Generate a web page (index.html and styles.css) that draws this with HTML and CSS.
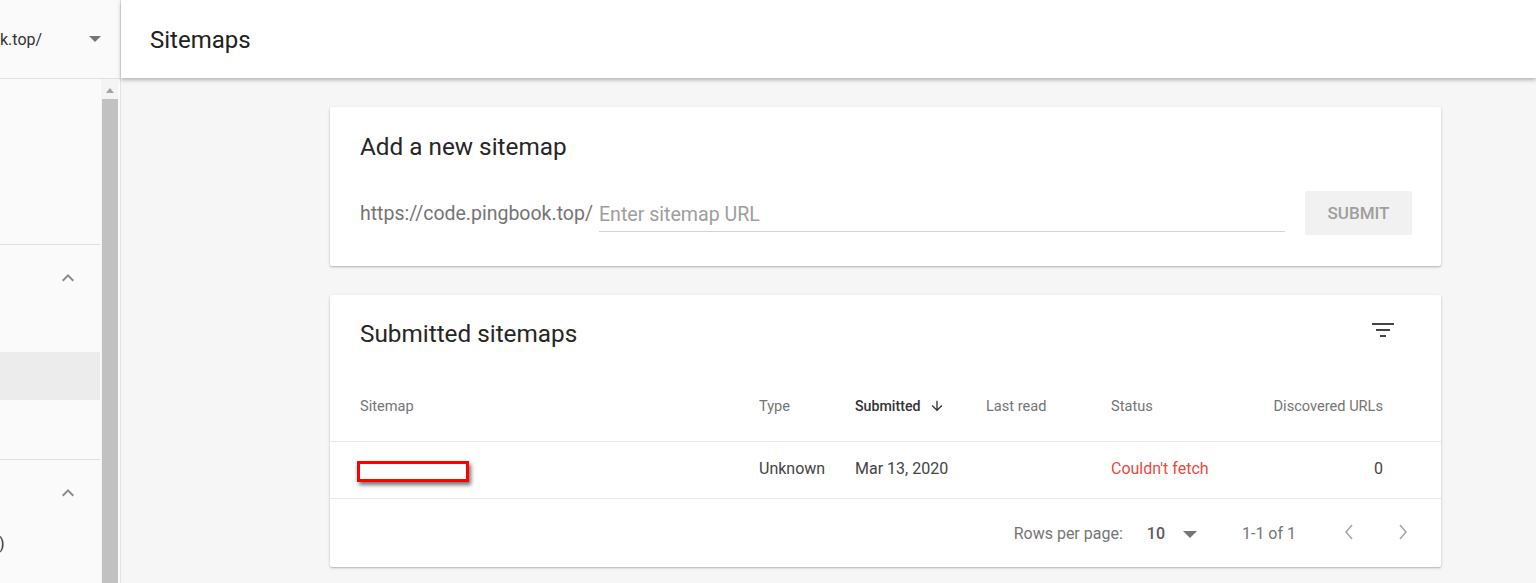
FILE: index.html
```html
<!DOCTYPE html>
<html lang="en">
<head>
<meta charset="utf-8">
<title>Sitemaps</title>
<link rel="stylesheet" href="styles.css">
</head>
<body>
<aside class="sidebar">
  <div class="property">
    <span class="property-name">k.top/</span>
    <svg class="property-caret" width="12" height="6" viewBox="0 0 12 6"><path d="M0 0h12L6 6z" fill="#757575"/></svg>
  </div>
  <div class="nav">
    <div class="nav-list">
      <div class="nav-section nav-section-top"></div>
      <div class="nav-section">
        <div class="nav-head">
          <svg class="chev" width="24" height="24" viewBox="0 0 24 24"><path d="M12 8l-6 6 1.41 1.41L12 10.83l4.59 4.58L18 14z" fill="#8a8a8a"/></svg>
        </div>
        <div class="nav-item"></div>
        <div class="nav-item selected"></div>
        <div class="nav-item"></div>
      </div>
      <div class="nav-section nav-section-last">
        <div class="nav-head">
          <svg class="chev" width="24" height="24" viewBox="0 0 24 24"><path d="M12 8l-6 6 1.41 1.41L12 10.83l4.59 4.58L18 14z" fill="#8a8a8a"/></svg>
        </div>
        <div class="nav-item"><span class="nav-text">)</span></div>
      </div>
    </div>
    <div class="scrollbar">
      <div class="scroll-arrow"><svg width="8" height="5" viewBox="0 0 8 5"><path d="M0 5L4 0l4 5z" fill="#a3a3a3"/></svg></div>
      <div class="scroll-thumb"></div>
    </div>
  </div>
</aside>

<main class="main">
  <header class="topbar"><h1 class="page-title">Sitemaps</h1></header>
  <div class="content">
    <section class="card card-add">
      <h2 class="card-title">Add a new sitemap</h2>
      <div class="add-row">
        <span class="prefix">https://code.pingbook.top/</span>
        <input class="url-input" type="text" placeholder="Enter sitemap URL">
        <button class="submit" type="button">SUBMIT</button>
      </div>
    </section>

    <section class="card card-list">
      <div class="list-head">
        <h2 class="card-title">Submitted sitemaps</h2>
        <svg class="filter" width="24" height="16" viewBox="0 0 24 16"><rect x="1" y="0" width="22" height="2" fill="#444"/><rect x="5" y="6" width="14" height="2" fill="#444"/><rect x="9" y="12" width="6" height="2" fill="#444"/></svg>
      </div>
      <div class="row row-head">
        <span>Sitemap</span>
        <span>Type</span>
        <span class="sorted">Submitted <svg class="sort-arrow" width="16" height="16" viewBox="0 0 24 24"><path d="M20 12l-1.41-1.41L13 16.17V4h-2v12.17l-5.58-5.59L4 12l8 8 8-8z" fill="#333"/></svg></span>
        <span>Last read</span>
        <span>Status</span>
        <span class="num">Discovered URLs</span>
      </div>
      <div class="row row-data">
        <span class="sitemap-cell"><span class="redact"></span></span>
        <span>Unknown</span>
        <span>Mar 13, 2020</span>
        <span></span>
        <span class="error">Couldn't fetch</span>
        <span class="num">0</span>
      </div>
      <div class="pager">
        <span class="pager-label">Rows per page:</span>
        <span class="pager-size">10</span>
        <svg class="pager-caret" width="14" height="7" viewBox="0 0 14 7"><path d="M0 0h14L7 7z" fill="#757575"/></svg>
        <span class="pager-range">1-1 of 1</span>
        <svg class="pager-btn" width="12" height="18" viewBox="0 0 12 18"><path d="M9 2L3 9l6 7" fill="none" stroke="#a8a8a8" stroke-width="1.6"/></svg>
        <svg class="pager-btn pager-next" width="12" height="18" viewBox="0 0 12 18"><path d="M3 2l6 7-6 7" fill="none" stroke="#a8a8a8" stroke-width="1.6"/></svg>
      </div>
    </section>
  </div>
</main>
</body>
</html>
```

FILE: styles.css
```css
* { box-sizing: border-box; }

html, body {
  margin: 0;
  height: 583px;
  overflow: hidden;
}

body {
  display: flex;
  font-family: Roboto, "Noto Sans", Arial, sans-serif;
  color: #212121;
  background: #f6f6f6;
}

/* Sidebar */
.sidebar {
  width: 121px;
  flex: 0 0 121px;
  background: #fafafa;
  border-right: 1px solid #e2e2e2;
  display: flex;
  flex-direction: column;
}

.property {
  height: 79px;
  border-bottom: 1px solid #e0e0e0;
  display: flex;
  align-items: center;
  padding-right: 19px;
}

.property-name {
  font-size: 16px;
  color: #333;
  flex: 1;
}

.nav {
  flex: 1;
  display: flex;
}

.nav-list {
  width: 100px;
  flex: 0 0 100px;
}

.nav-section {
  border-bottom: 1px solid #e0e0e0;
  padding-bottom: 11px;
}

.nav-section-top {
  height: 166px;
  padding: 0;
}

.nav-section-last { border-bottom: none; }

.nav-head {
  height: 59px;
  display: flex;
  justify-content: flex-end;
  align-items: flex-start;
  padding-top: 21px;
  padding-right: 20px;
}

.nav-item {
  height: 48px;
  display: flex;
  align-items: center;
}

.nav-item.selected { background: #ececec; }

.nav-text {
  font-size: 16px;
  color: #333;
  margin-left: -1px;
}

.scrollbar {
  width: 17px;
  flex: 0 0 17px;
  margin-left: 1px;
  display: flex;
  flex-direction: column;
  background: #f4f4f4;
}

.scroll-arrow {
  height: 20px;
  display: flex;
  align-items: center;
  justify-content: center;
  padding-top: 2px;
}

.scroll-thumb {
  flex: 1;
  background: #c1c1c1;
  margin: 0 0 0 1px;
}

/* Main */
.main {
  flex: 1;
  display: flex;
  flex-direction: column;
  min-width: 0;
}

.topbar {
  height: 78px;
  background: #fff;
  display: flex;
  align-items: center;
  padding-left: 29px;
  box-shadow: 0 2px 4px rgba(0, 0, 0, 0.28);
  position: relative;
  z-index: 2;
}

.page-title {
  margin: 2px 0 0 0;
  font-size: 24px;
  font-weight: 400;
  color: #212121;
}

.content {
  padding: 29px 95px 0 209px;
  display: flex;
  flex-direction: column;
  gap: 29px;
}

.card {
  background: #fff;
  border-radius: 2px;
  box-shadow: 0 1px 3px rgba(0, 0, 0, 0.22), 0 1px 1px rgba(0, 0, 0, 0.08);
}

.card-title {
  margin: 0;
  font-size: 24.3px;
  line-height: 32px;
  font-weight: 400;
  color: #262626;
}

.card-add {
  height: 159px;
  padding: 24px 29px 0 30px;
}

.add-row {
  display: flex;
  align-items: center;
  margin-top: 28px;
  height: 44px;
}

.prefix {
  font-size: 19.5px;
  color: #757575;
  margin-right: 6px;
  margin-top: 1px;
}

.url-input {
  flex: 1;
  height: 41px;
  margin-top: -3px;
  border: none;
  border-bottom: 1px solid #d4d4d4;
  background: transparent;
  padding: 6px 0 0 0;
  font-family: Roboto, "Noto Sans", Arial, sans-serif;
  font-size: 19.6px;
  color: #212121;
  outline: none;
}

.url-input::placeholder { color: #9e9e9e; }

.submit {
  margin-left: 20px;
  width: 107px;
  height: 44px;
  border: none;
  border-radius: 2px;
  background: #f1f1f1;
  color: #9e9e9e;
  font-family: Roboto, "Noto Sans", Arial, sans-serif;
  font-size: 17px;
  font-weight: 500;
  padding: 0;
}

.card-list { height: 272px; }

.list-head {
  height: 75px;
  padding: 23px 46px 0 30px;
  display: flex;
  justify-content: space-between;
  align-items: flex-start;
}

.filter { margin-top: 5px; }

.row {
  display: grid;
  grid-template-columns: 399px 96px 131px 125px 1fr auto;
  padding: 0 58px 0 30px;
  align-items: center;
  border-bottom: 1px solid #e6e6e6;
}

.row-head {
  height: 72px;
  font-size: 14.6px;
  font-weight: 400;
  color: #757575;
}

.row-head .sorted {
  color: #333;
  font-weight: 500;
  font-size: 14.2px;
  display: flex;
  align-items: center;
  gap: 9px;
}

.row-data {
  height: 57px;
  font-size: 16px;
  color: #444;
  padding-bottom: 3px;
}

.num { text-align: right; }

.error { color: #e84a3e; }

.sitemap-cell {
  position: relative;
  height: 20px;
}

.redact {
  position: absolute;
  left: -3px;
  top: 2px;
  width: 112px;
  height: 21px;
  border: 3px solid #ff0000;
  background: #fff;
  box-shadow: 2px 3px 4px rgba(0, 0, 0, 0.55);
}

.pager {
  height: 68px;
  display: flex;
  align-items: center;
  justify-content: flex-end;
  padding-right: 32px;
  font-size: 16px;
  color: #757575;
}

.pager-label { margin-right: 24px; }

.pager-size {
  color: #5a5a5a;
  font-weight: 500;
  margin-right: 18px;
}

.pager-caret { margin-top: 3px; margin-right: 45px; }

.pager-range { margin-right: 47px; }

.pager-btn { margin-top: -2px; }

.pager-next { margin-left: 42px; }
```
